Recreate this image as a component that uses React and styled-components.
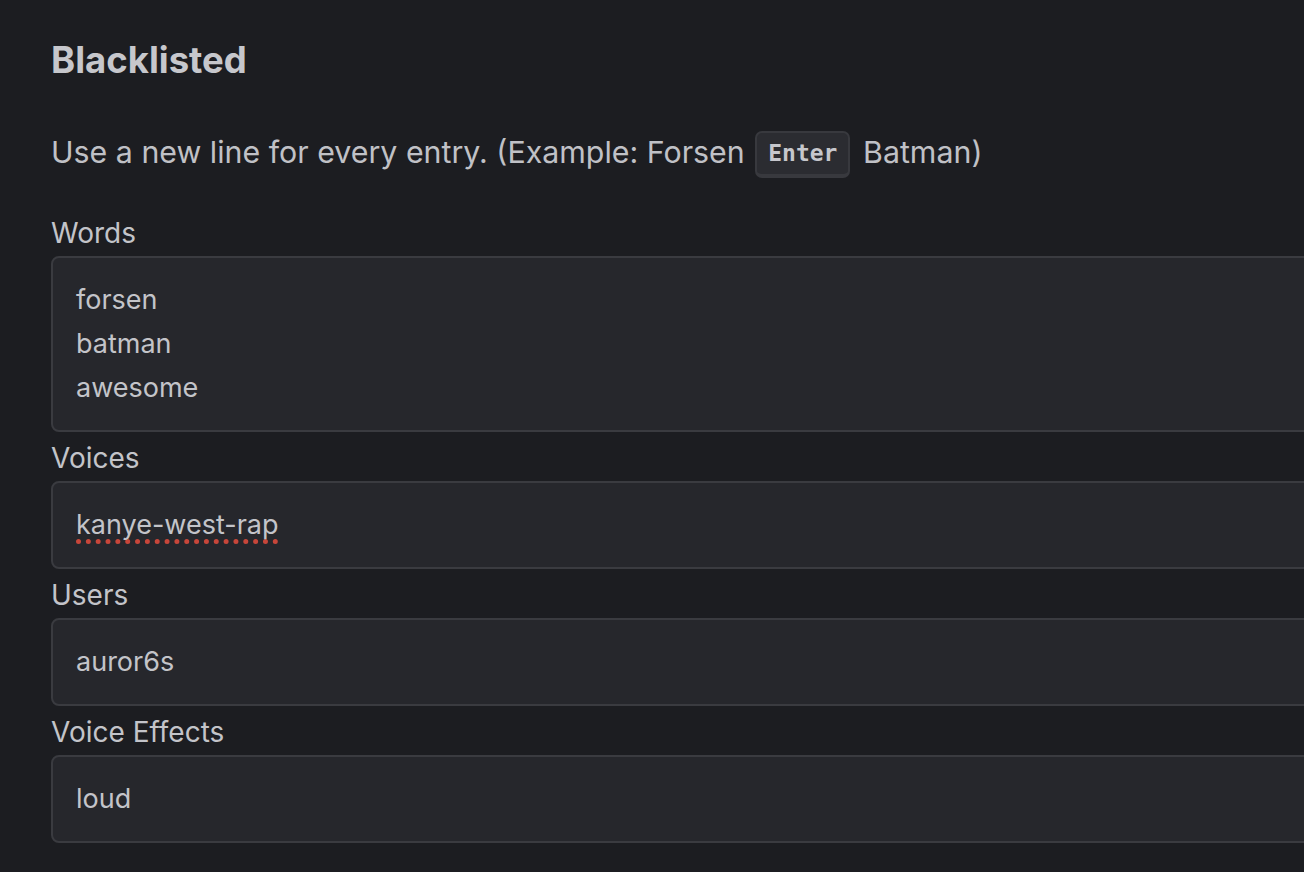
import styled, { createGlobalStyle } from "styled-components";

const GlobalStyle = createGlobalStyle`
  html, body {
    margin: 0;
    padding: 0;
    background-color: #1c1d21;
    overflow: hidden;
  }
  body {
    font-family: Inter, "Noto Sans", "Liberation Sans", sans-serif;
    color: #c3c4c9;
  }
`;

const Page = styled.div`
  width: 1304px;
  height: 872px;
  padding: 36px 0 0 51px;
  box-sizing: border-box;
  overflow: hidden;
`;

const Title = styled.h2`
  margin: 0;
  font-size: 36.5px;
  line-height: 48px;
  font-weight: 700;
  color: #c6c7cc;
`;

const Hint = styled.p`
  margin: 44px 0 0;
  font-size: 30.35px;
  line-height: 48px;
  color: #c0c1c6;
`;

const Key = styled.kbd`
  display: inline-block;
  font-family: "DejaVu Sans Mono", "Liberation Mono", monospace;
  font-weight: 700;
  font-size: 23px;
  line-height: 41px;
  padding: 0 11px;
  margin: 0 4px 0 2px;
  background-color: #2b2c31;
  border: 2px solid #38393e;
  border-bottom-width: 4px;
  border-radius: 7px;
  color: #c6c7cc;
  vertical-align: middle;
`;

const Group = styled.div`
  display: flex;
  flex-direction: column;
`;

const Label = styled.label`
  display: block;
  margin: ${(p) => (p.$first ? "36px" : "7px")} 0 4px;
  font-size: 28px;
  line-height: 38px;
  color: #c3c4c9;
`;

const Field = styled.div`
  width: 1320px;
  box-sizing: border-box;
  padding: 20px 23px;
  background-color: #26272c;
  border: 2px solid #3a3b40;
  border-radius: 8px;
  font-size: 27px;
  line-height: 44px;
  color: #c3c4c9;
`;

const Line = styled.div`
  white-space: pre;
`;

const Misspelled = styled.span`
  text-decoration: underline dotted #c8463a;
  text-decoration-thickness: 5px;
  text-underline-offset: 5px;
  text-decoration-skip-ink: none;
`;

const lists = [
  { label: "Words", lines: ["forsen", "batman", "awesome"] },
  { label: "Voices", lines: ["kanye-west-rap"], flagged: true },
  { label: "Users", lines: ["auror6s"] },
  { label: "Voice Effects", lines: ["loud"] },
];

export default function App() {
  return (
    <>
      <GlobalStyle />
      <Page>
        <Title>Blacklisted</Title>
        <Hint>
          Use a new line for every entry. (Example: Forsen <Key>Enter</Key>{" "}
          Batman)
        </Hint>
        {lists.map((list, i) => (
          <Group key={list.label}>
            <Label $first={i === 0}>{list.label}</Label>
            <Field>
              {list.lines.map((line) => (
                <Line key={line}>
                  {list.flagged ? <Misspelled>{line}</Misspelled> : line}
                </Line>
              ))}
            </Field>
          </Group>
        ))}
      </Page>
    </>
  );
}
